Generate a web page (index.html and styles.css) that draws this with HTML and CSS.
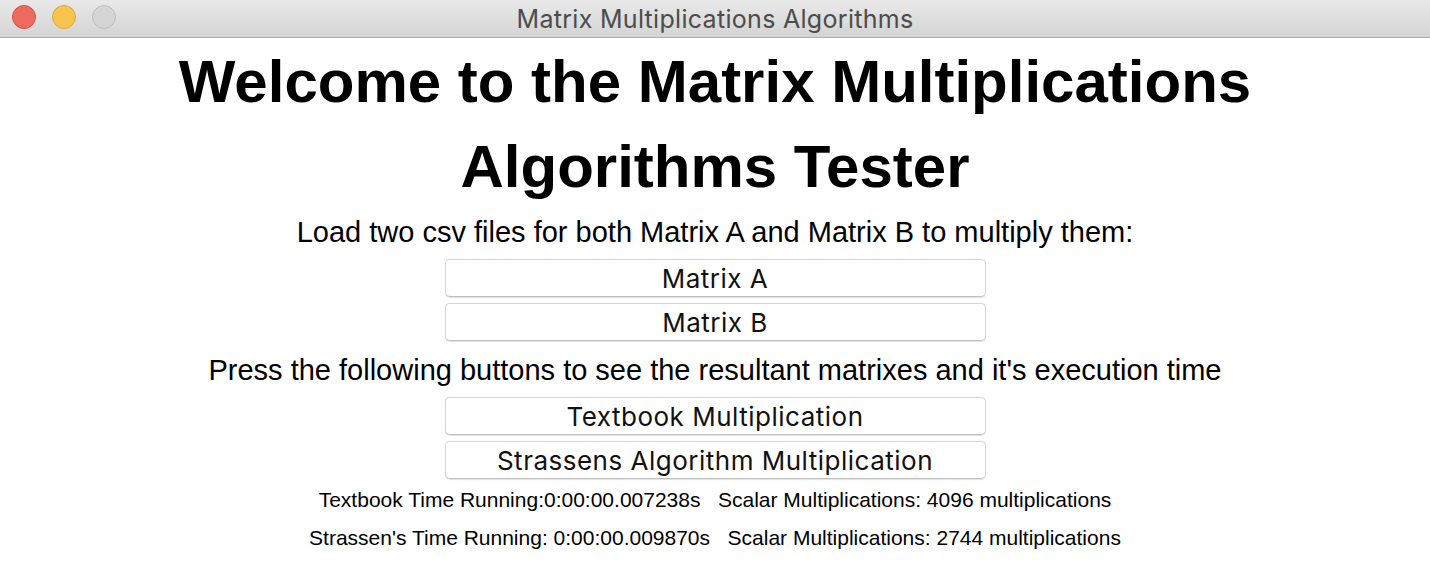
FILE: index.html
```html
<!DOCTYPE html>
<html>
<head>
<meta charset="utf-8">
<title>Matrix Multiplications Algorithms</title>
<link rel="stylesheet" href="styles.css">
</head>
<body>
<div class="window">
  <div class="titlebar">
    <div class="lights">
      <span class="light red"></span>
      <span class="light yellow"></span>
      <span class="light gray"></span>
    </div>
    <div class="wtitle">Matrix Multiplications Algorithms</div>
  </div>
  <main class="content">
    <h1 class="heading">Welcome to the Matrix Multiplications<br>Algorithms Tester</h1>
    <p class="label">Load two csv files for both Matrix A and Matrix B to multiply them:</p>
    <div class="btns">
      <button class="btn">Matrix A</button>
      <button class="btn">Matrix B</button>
    </div>
    <p class="label second">Press the following buttons to see the resultant matrixes and it's execution time</p>
    <div class="btns">
      <button class="btn">Textbook Multiplication</button>
      <button class="btn">Strassens Algorithm Multiplication</button>
    </div>
    <p class="small">Textbook Time Running:0:00:00.007238s&nbsp;&nbsp;&nbsp;Scalar Multiplications: 4096 multiplications</p>
    <p class="small">Strassen's Time Running: 0:00:00.009870s&nbsp;&nbsp;&nbsp;Scalar Multiplications: 2744 multiplications</p>
  </main>
</div>
</body>
</html>
```
FILE: styles.css
```css
html, body {
  margin: 0;
  padding: 0;
  background: #ffffff;
}
.window {
  width: 1430px;
  height: 574px;
  display: flex;
  flex-direction: column;
  background: #ffffff;
  overflow: hidden;
}
.titlebar {
  height: 37px;
  flex: 0 0 37px;
  background: linear-gradient(#e9e9e9, #d4d4d4);
  border-bottom: 1px solid #adadad;
  display: flex;
  align-items: center;
  position: relative;
}
.lights {
  display: flex;
  gap: 16px;
  padding-left: 12px;
  position: absolute;
  left: 0;
  top: 5px;
}
.light {
  width: 24px;
  height: 24px;
  border-radius: 50%;
  box-sizing: border-box;
}
.red { background: #ee6a5f; border: 1px solid #d55449; }
.yellow { background: #f7c452; border: 1px solid #dca93d; }
.gray { background: #d5d5d5; border: 1px solid #bdbdbd; }
.wtitle {
  flex: 1;
  text-align: center;
  font-family: Inter, "Liberation Sans", sans-serif;
  font-size: 25px;
  letter-spacing: 0.3px;
  color: #4c4c4c;
}
.content {
  display: flex;
  flex-direction: column;
  align-items: center;
  font-family: "Liberation Sans", Arial, sans-serif;
  color: #000;
}
.heading {
  margin: 1px 0 0 0;
  font-size: 60px;
  line-height: 85px;
  font-weight: bold;
  text-align: center;
}
.label {
  margin: 3px 0 0 0;
  font-size: 29px;
  line-height: 40px;
}
.label.second {
  margin-top: 9px;
}
.btns {
  display: flex;
  flex-direction: column;
  gap: 6px;
  margin-top: 7px;
}
.btn {
  width: 541px;
  height: 38px;
  background: #ffffff;
  border: 1px solid #d6d6d6;
  border-bottom-color: #c0c0c0;
  border-radius: 5px;
  box-shadow: 0 0.5px 1px rgba(0,0,0,0.12);
  font-family: Inter, "Liberation Sans", sans-serif;
  font-size: 26px;
  letter-spacing: 0.5px;
  color: #111;
  padding: 0;
}
.small {
  margin: 5px 0 0 0;
  font-size: 21px;
  line-height: 32px;
}
.small + .small {
  margin-top: 6px;
}
```
